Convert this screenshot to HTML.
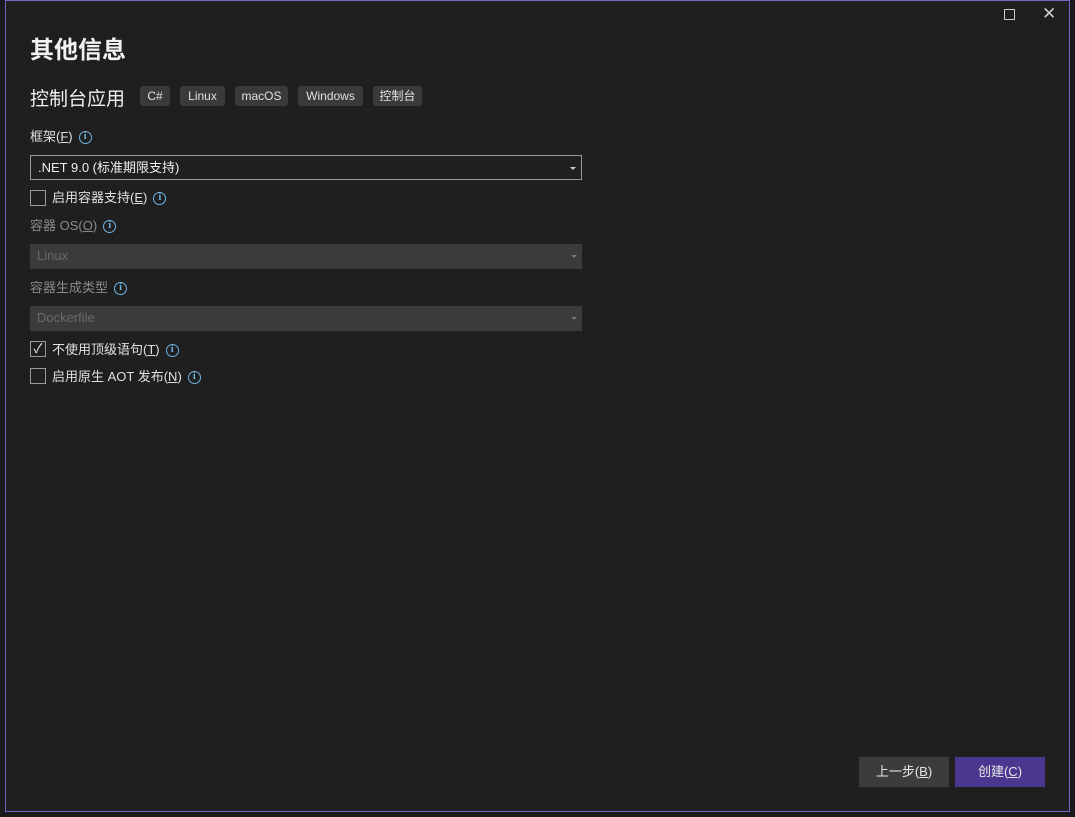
<!DOCTYPE html>
<html><head><meta charset="utf-8"><style>
*{margin:0;padding:0;box-sizing:border-box}
body{width:1075px;height:817px;background:#1a1a1a;overflow:hidden;position:relative;font-family:"Liberation Sans","Noto Sans CJK SC",sans-serif;color:#e6e6e6}
.win{position:absolute;left:5px;top:0;width:1065px;height:812px;background:#1f1f1f;border:1px solid #7266c8}
.a{position:absolute}
h1{position:absolute;left:24px;top:29px;font-size:24px;font-weight:bold;color:#f2f2f2}
.sub{left:24px;top:83px;font-size:19px;color:#f0f0f0}
.tag{top:85px;height:20px;background:#3a3a3a;border-radius:3px;font-size:12px;line-height:20px;text-align:center;color:#e0e0e0}
.lbl{font-size:13px;color:#e0e0e0;left:24px;line-height:16px;display:flex;align-items:center}
.dis{color:#8a8a8a}
.info{display:inline-block;width:13px;height:13px;border:1.5px solid #6cb4e4;border-radius:50%;color:#6cb4e4;font-size:10px;line-height:10px;text-align:center;font-weight:bold;margin-left:6px;font-family:"Liberation Serif",serif}
.sel{left:24px;width:552px;height:25px;font-size:13px;line-height:23px;padding-left:7px}
.arrow{position:absolute;right:5px;top:11px;width:0;height:0;border-left:3px solid transparent;border-right:3px solid transparent;border-top:3px solid #ccc}
.cb{position:absolute;left:24px;width:16px;height:16px;border:1px solid #9a9a9a}
.btn{top:756px;width:90px;height:30px;font-size:13px;line-height:30px;text-align:center;color:#e8e8e8}
u{text-decoration:underline}
</style></head><body>
<div class="win">
<div class="a" style="left:998px;top:8px;width:11px;height:11px;border:1px solid #ccc"></div>
<div class="a" style="left:1036px;top:3px;font-size:17px;color:#ccc">✕</div>
<h1>其他信息</h1>
<div class="a sub">控制台应用</div>
<div class="a tag" style="left:134px;width:30px">C#</div>
<div class="a tag" style="left:174px;width:45px">Linux</div>
<div class="a tag" style="left:229px;width:53px">macOS</div>
<div class="a tag" style="left:292px;width:65px">Windows</div>
<div class="a tag" style="left:367px;width:49px">控制台</div>
<div class="a lbl" style="top:128px">框架(<u>F</u>)<span class="info">i</span></div>
<div class="a sel" style="top:154px;border:1px solid #9a9a9a;background:#1f1f1f;color:#eee">.NET 9.0 (标准期限支持)<div class="arrow"></div></div>
<div class="cb" style="top:189px"></div>
<div class="a lbl" style="left:46px;top:189px">启用容器支持(<u>E</u>)<span class="info">i</span></div>
<div class="a lbl dis" style="top:217px">容器 OS(<u>O</u>)<span class="info">i</span></div>
<div class="a sel" style="top:243px;background:#3b3b3b;color:#6a6a6a">Linux<div class="arrow" style="border-top-color:#777"></div></div>
<div class="a lbl dis" style="top:279px">容器生成类型<span class="info">i</span></div>
<div class="a sel" style="top:305px;background:#3b3b3b;color:#6a6a6a">Dockerfile<div class="arrow" style="border-top-color:#777"></div></div>
<div class="cb" style="top:340px;font-size:13px;line-height:14px;text-align:center;color:#eee">✓</div>
<div class="a lbl" style="left:46px;top:341px">不使用顶级语句(<u>T</u>)<span class="info">i</span></div>
<div class="cb" style="top:367px"></div>
<div class="a lbl" style="left:46px;top:368px">启用原生 AOT 发布(<u>N</u>)<span class="info">i</span></div>
<div class="a btn" style="left:853px;background:#3c3c3c">上一步(<u>B</u>)</div>
<div class="a btn" style="left:949px;background:#4a3890">创建(<u>C</u>)</div>
</div>
</body></html>
